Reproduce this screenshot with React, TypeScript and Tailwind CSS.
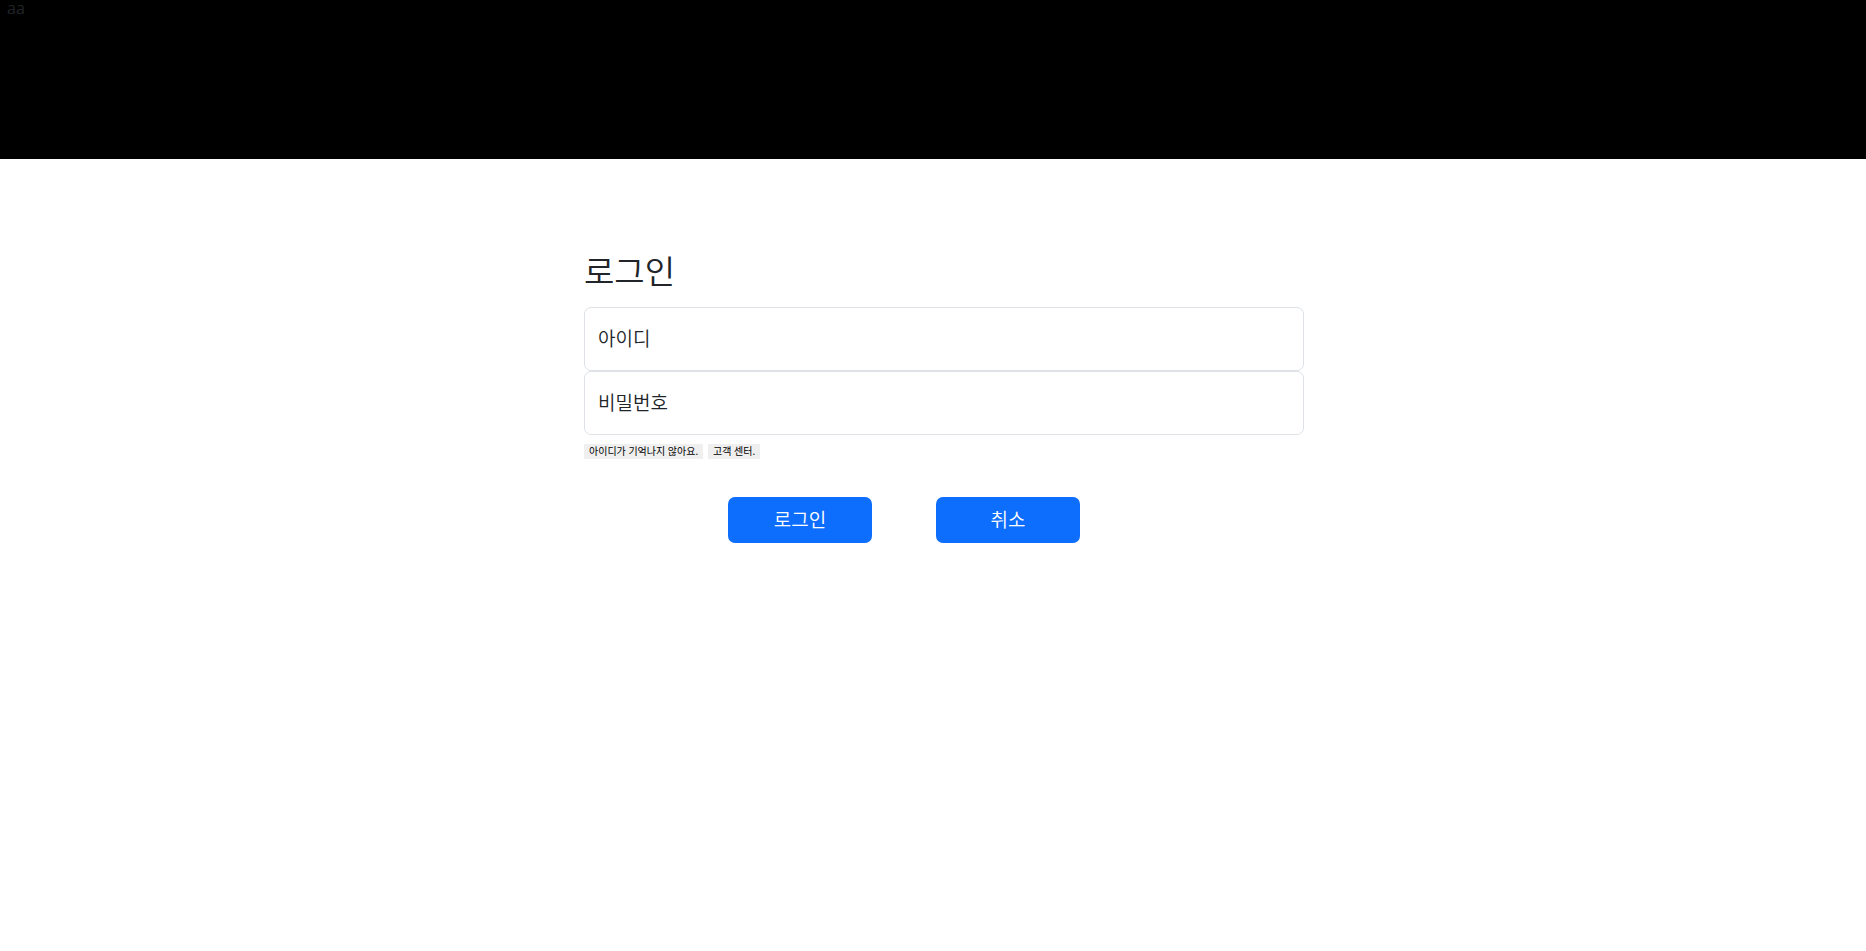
import React from "react";

type FieldProps = { id: string; label: string; type: string };

function FloatingField({ id, label, type }: FieldProps) {
  return (
    <div className="relative">
      <input
        id={id}
        type={type}
        placeholder=" "
        className="peer block h-16 w-full rounded-[7px] border border-[#dee2e6] bg-white px-3.5 pt-6 text-xl outline-none focus:border-[#86b7fe]"
      />
      <label
        htmlFor={id}
        className="pointer-events-none absolute inset-y-0 left-3.5 flex items-center text-[19px] leading-7 peer-focus:items-start peer-focus:text-sm peer-[:not(:placeholder-shown)]:items-start peer-[:not(:placeholder-shown)]:text-sm"
      >
        {label}
      </label>
    </div>
  );
}

const smallButton = "h-[15px] bg-[#efefef] px-[5px] text-[10px] leading-[15px] font-normal text-black";
const mainButton = "h-[46px] w-36 rounded-[7px] bg-[#0d6efd] text-[19px] leading-7 text-white hover:bg-[#0b5ed7]";

export default function App() {
  return (
    <div className="min-h-screen bg-white font-['Noto_Sans','Noto_Sans_CJK_KR',sans-serif] font-[350] text-[#212529]">
      <header className="h-[159px] bg-black px-[7px]">
        <p className="font-['Open_Sans',sans-serif] text-base leading-4 font-normal">aa</p>
      </header>
      <main className="pl-[22px] pt-[93px]">
        <form className="mx-auto w-full max-w-[720px]" onSubmit={(e) => e.preventDefault()}>
          <h1 className="mb-[15px] text-[33px] leading-10 font-[350]">로그인</h1>
          <FloatingField id="user-id" label="아이디" type="text" />
          <FloatingField id="password" label="비밀번호" type="password" />
          <div className="mt-[9px] flex gap-[5px]">
            <button type="button" className={smallButton}>아이디가 기억나지 않아요.</button>
            <button type="button" className={smallButton}>고객 센터.</button>
          </div>
          <div className="mt-[38px] flex gap-16 pl-36">
            <button type="submit" className={mainButton}>로그인</button>
            <button type="button" className={mainButton}>취소</button>
          </div>
        </form>
      </main>
    </div>
  );
}
